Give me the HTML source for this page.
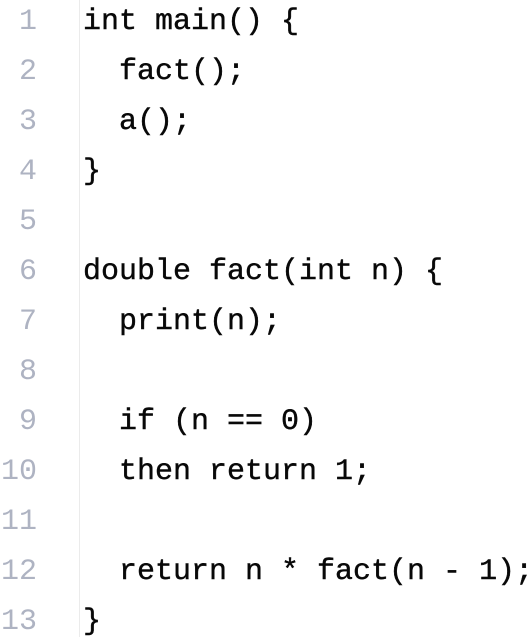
<!DOCTYPE html>
<html><head><style>
html,body{margin:0;padding:0;background:#fff;width:530px;height:637px;overflow:hidden}
.wrap{position:relative;width:530px;height:637px}
.sep{position:absolute;left:79px;top:0;width:1px;height:637px;background:#ebebeb}
.nums{position:absolute;left:0;top:-3px;width:37px;text-align:right;font:30px/50px "Liberation Mono","DejaVu Sans Mono",monospace;color:#aeb3c2;white-space:pre}
.code{position:absolute;left:83px;top:-3px;font:30px/50px "Liberation Mono","DejaVu Sans Mono",monospace;color:#080808;white-space:pre;-webkit-text-stroke:0.4px #080808}
</style></head><body><div class="wrap">
<div class="sep"></div>
<div class="nums">1
2
3
4
5
6
7
8
9
10
11
12
13</div>
<div class="code">int main() {
  fact();
  a();
}

double fact(int n) {
  print(n);

  if (n == 0)
  then return 1;

  return n * fact(n - 1);
}</div>
</div></body></html>
